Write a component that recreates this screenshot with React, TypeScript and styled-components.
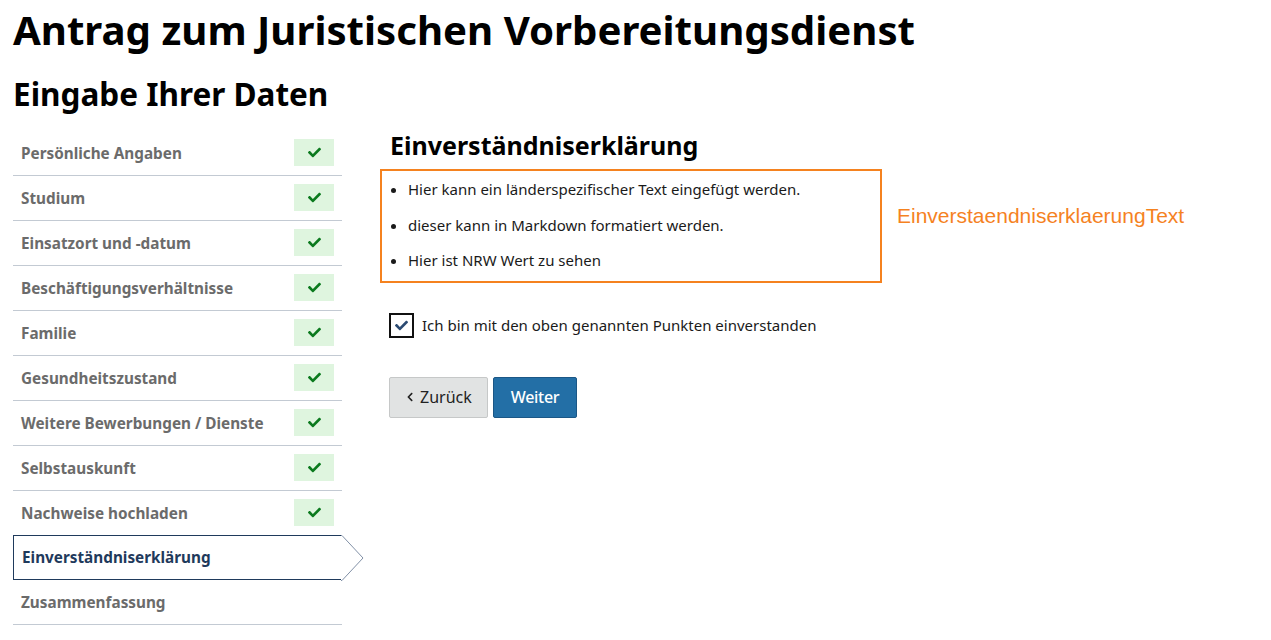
import React, { useState } from 'react';
import styled, { createGlobalStyle } from 'styled-components';
import { FaCheck, FaChevronLeft } from 'react-icons/fa';

const GlobalStyle = createGlobalStyle`
  html, body {
    margin: 0;
    padding: 0;
    background: #ffffff;
  }
  body {
    font-family: 'Noto Sans', 'DejaVu Sans', sans-serif;
    color: #1a1a1a;
  }
  * {
    box-sizing: border-box;
  }
`;

const Page = styled.div`
  padding: 6px 13px 0;
  width: 1271px;
`;

const Title = styled.h1`
  margin: 0;
  font-size: 40.2px;
  line-height: 48px;
  font-weight: 700;
  color: #000;
`;

const Subtitle = styled.h2`
  margin: 20px 0 0;
  font-size: 31.5px;
  line-height: 40px;
  font-weight: 700;
  color: #000;
`;

const Layout = styled.div`
  display: flex;
  align-items: flex-start;
  margin-top: 17px;
`;

const StepList = styled.nav`
  width: 329px;
  flex-shrink: 0;
  display: flex;
  flex-direction: column;
`;

const Step = styled.div<{ $active?: boolean }>`
  position: relative;
  height: 45px;
  display: flex;
  align-items: center;
  justify-content: space-between;
  padding: 0 8px 1px 8px;
  font-size: 15.3px;
  font-weight: 700;
  color: ${(p) => (p.$active ? '#1f3a5c' : '#6b6b6b')};
  border-bottom: 1px solid ${(p) => (p.$active ? '#1f3a5c' : '#c3cad3')};
  border-top: ${(p) => (p.$active ? '1px solid #1f3a5c' : 'none')};
  border-left: ${(p) => (p.$active ? '1px solid #1f3a5c' : 'none')};
  margin-top: ${(p) => (p.$active ? '-1px' : '0')};
`;

const Pointer = styled.svg`
  position: absolute;
  top: -1px;
  right: -22px;
  width: 23px;
  height: 46px;
  overflow: visible;
`;

const DoneBadge = styled.span`
  width: 40px;
  height: 27px;
  background: #dff5df;
  display: flex;
  align-items: center;
  justify-content: center;
  color: #0b7a1e;
  font-size: 13px;
`;

const Main = styled.main`
  margin-left: 48px;
  display: flex;
  flex-direction: column;
  align-items: flex-start;
`;

const SectionTitle = styled.h3`
  margin: -1px 0 0 0;
  font-size: 25px;
  line-height: 30px;
  font-weight: 700;
  color: #000;
`;

const InfoRow = styled.div`
  display: flex;
  align-items: center;
  margin-top: 9px;
  margin-left: -10px;
`;

const InfoBox = styled.ul`
  width: 502px;
  margin: 0;
  padding: 1px 0 2px 26px;
  border: 2px solid #f5821f;
  font-size: 15px;
  color: #1a1a1a;

  li {
    line-height: 35.5px;
    padding-left: 0;
  }
`;

const KeyHint = styled.span`
  margin-left: 15px;
  margin-top: -20px;
  font-family: 'Liberation Sans', Arial, sans-serif;
  font-size: 21px;
  color: #f5821f;
`;

const ConsentLabel = styled.label`
  display: flex;
  align-items: center;
  gap: 8px;
  margin-top: 30px;
  margin-left: -1px;
  font-size: 15px;
  color: #1a1a1a;
  cursor: pointer;
`;

const Box = styled.span`
  width: 25px;
  height: 25px;
  border: 2px solid #111;
  display: flex;
  align-items: center;
  justify-content: center;
  color: #2b4a72;
  font-size: 13px;
`;

const Actions = styled.div`
  display: flex;
  gap: 5px;
  margin-top: 39px;
  margin-left: -1px;
`;

const Button = styled.button<{ $primary?: boolean }>`
  height: 41px;
  padding: 0 ${(p) => (p.$primary ? '17px' : '15px')};
  display: flex;
  align-items: center;
  gap: 5px;
  font-family: 'Noto Sans', sans-serif;
  font-size: 16px;
  border-radius: 2px;
  cursor: pointer;
  border: 1px solid ${(p) => (p.$primary ? '#1b5786' : '#c6c8c8')};
  background: ${(p) => (p.$primary ? '#236fa6' : '#e1e3e3')};
  color: ${(p) => (p.$primary ? '#ffffff' : '#222')};
  font-weight: ${(p) => (p.$primary ? 500 : 400)};
  letter-spacing: ${(p) => (p.$primary ? '-0.3px' : '0')};

  svg {
    font-size: 10px;
  }
`;

const steps = [
  'Persönliche Angaben',
  'Studium',
  'Einsatzort und -datum',
  'Beschäftigungsverhältnisse',
  'Familie',
  'Gesundheitszustand',
  'Weitere Bewerbungen / Dienste',
  'Selbstauskunft',
  'Nachweise hochladen',
  'Einverständniserklärung',
  'Zusammenfassung',
];

const activeIndex = 9;

const App: React.FC = () => {
  const [agreed, setAgreed] = useState(true);

  return (
    <Page>
      <GlobalStyle />
      <Title>Antrag zum Juristischen Vorbereitungsdienst</Title>
      <Subtitle>Eingabe Ihrer Daten</Subtitle>
      <Layout>
        <StepList>
          {steps.map((name, i) => (
            <Step key={name} $active={i === activeIndex}>
              <span>{name}</span>
              {i < activeIndex && (
                <DoneBadge>
                  <FaCheck />
                </DoneBadge>
              )}
              {i === activeIndex && (
                <Pointer viewBox="0 0 23 46">
                  <polygon points="0,0.5 1,0.5 22,23 1,45.5 0,45.5" fill="#fff" />
                  <polyline points="0,0.5 1,0.5 22,23 1,45.5 0,45.5" fill="none" stroke="#8291a7" strokeWidth="1" />
                </Pointer>
              )}
            </Step>
          ))}
        </StepList>
        <Main>
          <SectionTitle>Einverständniserklärung</SectionTitle>
          <InfoRow>
            <InfoBox>
              <li>Hier kann ein länderspezifischer Text eingefügt werden.</li>
              <li>dieser kann in Markdown formatiert werden.</li>
              <li>Hier ist NRW Wert zu sehen</li>
            </InfoBox>
            <KeyHint>EinverstaendniserklaerungText</KeyHint>
          </InfoRow>
          <ConsentLabel onClick={() => setAgreed(!agreed)}>
            <Box>{agreed && <FaCheck />}</Box>
            Ich bin mit den oben genannten Punkten einverstanden
          </ConsentLabel>
          <Actions>
            <Button>
              <FaChevronLeft />
              Zurück
            </Button>
            <Button $primary>Weiter</Button>
          </Actions>
        </Main>
      </Layout>
    </Page>
  );
};

export default App;
